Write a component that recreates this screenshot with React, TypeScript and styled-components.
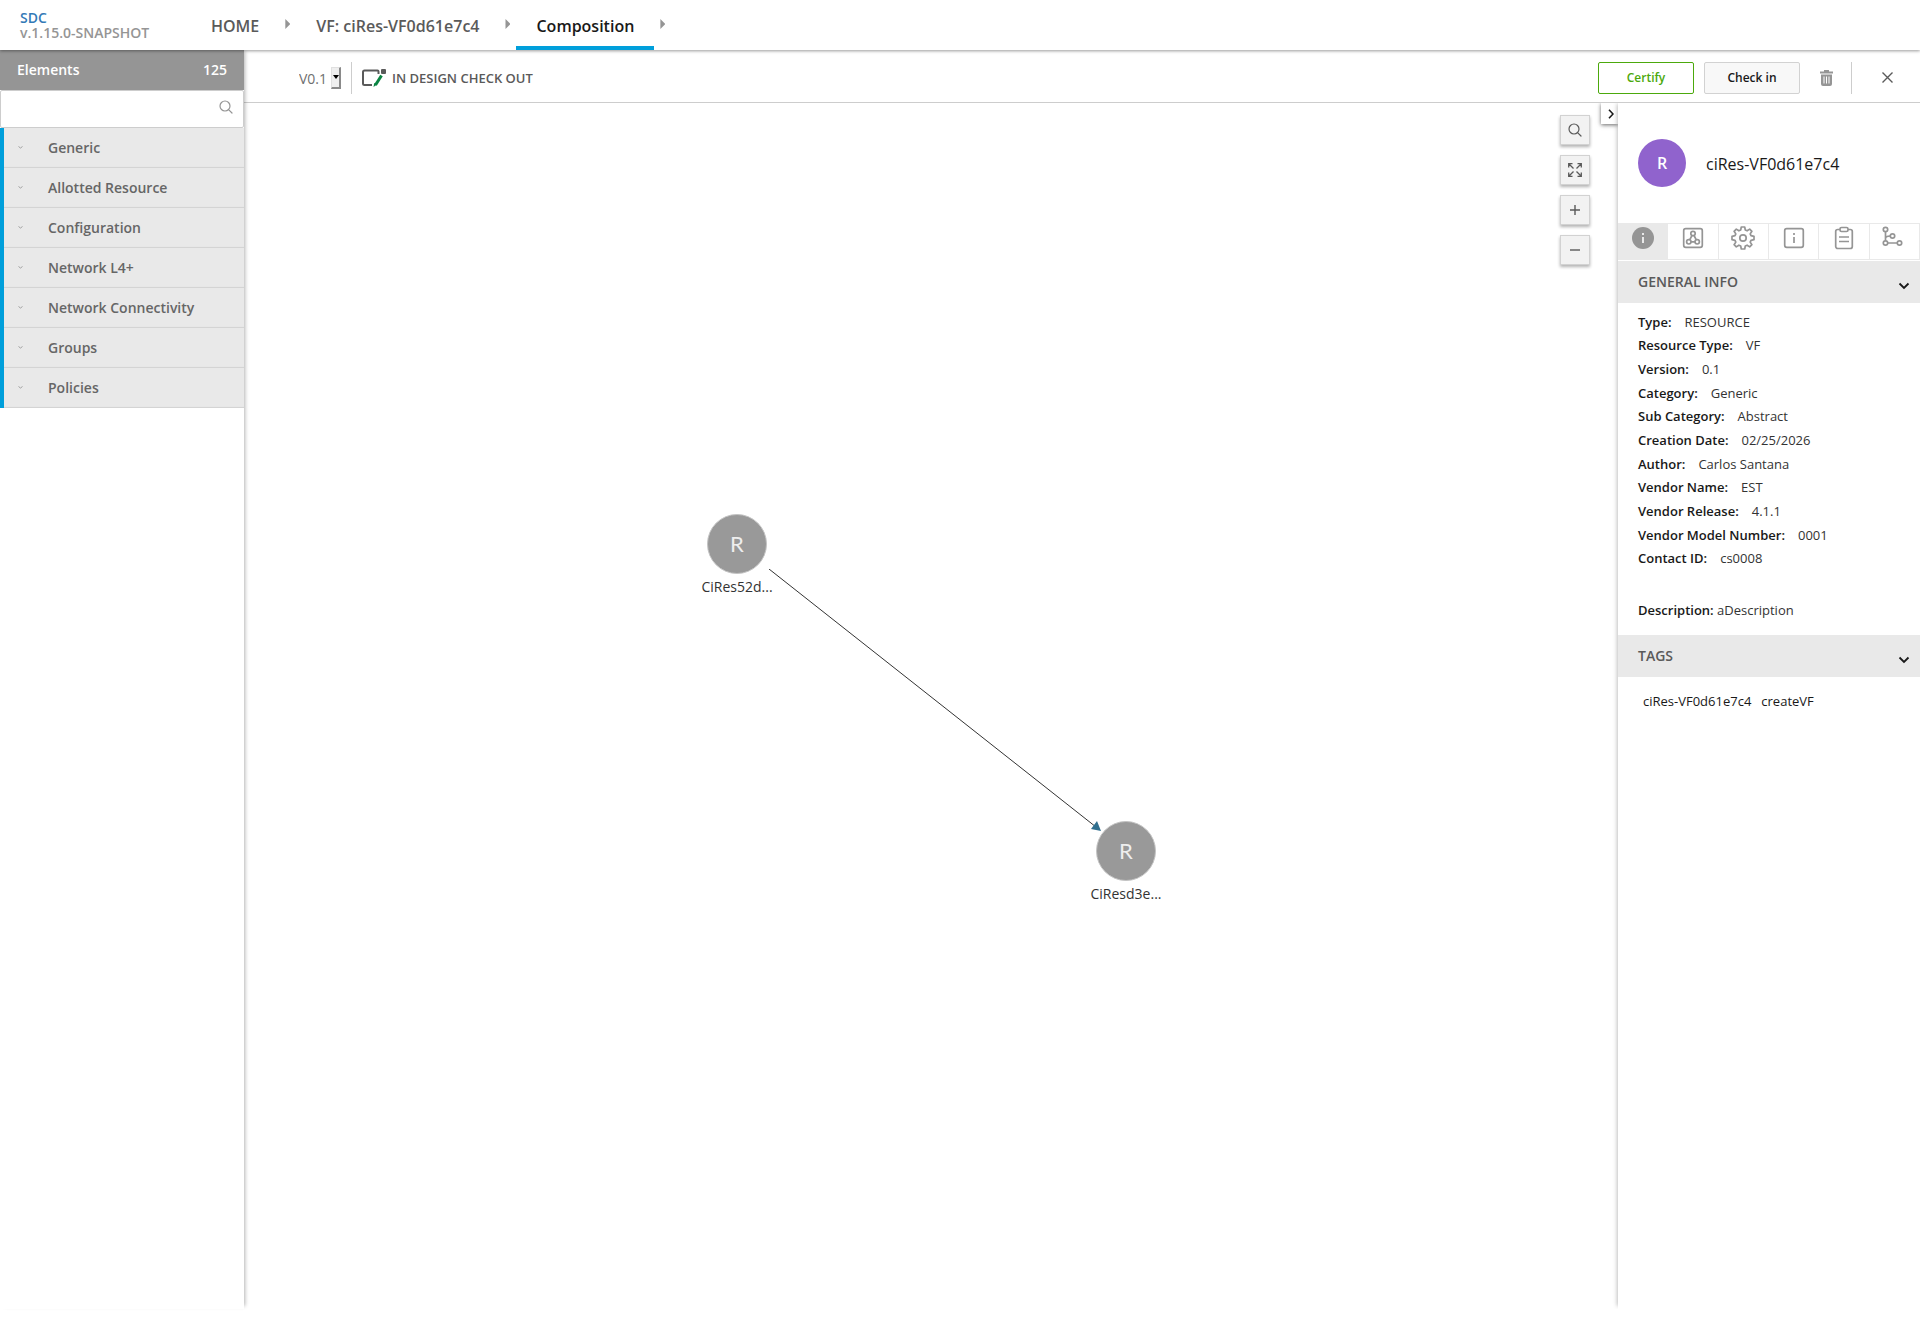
import React from 'react';
import styled, { createGlobalStyle } from 'styled-components';

const GlobalStyle = createGlobalStyle`
  *, *::before, *::after { box-sizing: border-box; }
  body {
    margin: 0;
    background: #fff;
    color: #191919;
    font-family: "Open Sans", "Noto Sans", sans-serif;
    font-size: 13px;
  }
  button, input, select { font: inherit; color: inherit; }
  button { cursor: pointer; }
  h1, h2, dl, dd, ul, p { margin: 0; padding: 0; }
`;

const Page = styled.div`
  display: flex;
  flex-direction: column;
  height: 100vh;
  overflow: hidden;
`;

const Header = styled.header`
  position: relative;
  z-index: 3;
  display: flex;
  flex: none;
  height: 50px;
  background: #fff;
  box-shadow: 0 1px 3px rgba(0, 0, 0, 0.4);
`;

const Brand = styled.div`
  display: flex;
  flex-direction: column;
  width: 191px;
  padding: 10px 0 0 20px;
  font-size: 14px;
  font-weight: 600;
  line-height: 15px;
  color: #959595;
`;

const BrandLink = styled.a`
  color: #337ab7;
  text-decoration: none;
`;

const Breadcrumbs = styled.nav`
  display: flex;
  align-items: stretch;
`;

const Crumb = styled.a<{ $active?: boolean }>`
  padding: 13px 20px 0;
  border-bottom: 4px solid ${(p) => (p.$active ? '#009fdb' : 'transparent')};
  color: ${(p) => (p.$active ? '#191919' : '#5a5a5a')};
  font-size: 16px;
  font-weight: 600;
  line-height: 26px;
  text-decoration: none;
`;

const CrumbArrow = styled.span`
  width: 5px;
  height: 10px;
  margin: 19px 6px 0;
  background: #959595;
  clip-path: polygon(0 0, 100% 50%, 0 100%);
`;

const Body = styled.div`
  display: flex;
  flex: 1;
  min-height: 0;
  padding-bottom: 10px;
`;

const Sidebar = styled.aside`
  position: relative;
  z-index: 2;
  flex: none;
  width: 244px;
  background: #fff;
  box-shadow: 3px -1px 4px -2px rgba(0, 0, 0, 0.3);
`;

const SidebarTitle = styled.h2`
  display: flex;
  justify-content: space-between;
  height: 40px;
  padding: 0 17px;
  background: #959595;
  color: #fff;
  font-size: 14px;
  font-weight: 600;
  line-height: 40px;
`;

const SearchBox = styled.label`
  display: flex;
  align-items: center;
  height: 38px;
  padding: 0 10px 4px 0;
  border: 1px solid #cdcdcd;
  border-radius: 2px;
  color: #959595;
`;

const SearchInput = styled.input`
  flex: 1;
  min-width: 0;
  height: 100%;
  padding: 0 10px;
  border: 0;
  outline: 0;
  background: transparent;
`;

const Category = styled.button`
  display: flex;
  align-items: center;
  gap: 25px;
  width: 100%;
  height: 40px;
  padding: 0 0 1px 14px;
  border: 0;
  border-left: 4px solid #009fdb;
  background: #e9e9e9;
  box-shadow: inset 0 -2px 1px -1px #d2d2d2;
  color: #666;
  font-size: 14px;
  font-weight: 600;
  text-align: left;
`;

const Main = styled.main`
  display: flex;
  flex-direction: column;
  flex: 1;
  min-width: 0;
`;

const Toolbar = styled.div`
  display: flex;
  align-items: center;
  justify-content: space-between;
  flex: none;
  height: 53px;
  padding: 3px 27px 0 55px;
  border-bottom: 1px solid #cdcdcd;
`;

const ToolbarGroup = styled.div`
  display: flex;
  align-items: center;
`;

const VersionPicker = styled.label`
  display: grid;
  grid-template-columns: 32px 10px;
  align-items: center;
  margin-right: 10px;
`;

const VersionSelect = styled.select`
  grid-area: 1 / 1 / 2 / 3;
  height: 24px;
  padding: 2px 0 0;
  border: 0;
  appearance: none;
  background: transparent;
  color: #6f6f6f;
  font-size: 14px;
`;

const VersionArrow = styled.span`
  display: grid;
  grid-area: 1 / 2;
  place-items: center;
  height: 22px;
  border: 1px solid #e0e0e0;
  border-right: 2px solid #8a8a8a;
  border-bottom: 2px solid #8a8a8a;
  background: #efefef;
  pointer-events: none;
`;

const Divider = styled.span<{ $gap: number }>`
  width: 1px;
  height: 32px;
  margin-right: ${(p) => p.$gap}px;
  background: #cdcdcd;
`;

const Status = styled.span`
  margin-left: 5px;
  color: #5a5a5a;
  font-size: 13px;
  font-weight: 600;
`;

const ActionButton = styled.button<{ $primary?: boolean }>`
  width: 96px;
  height: 32px;
  margin-right: ${(p) => (p.$primary ? 10 : 20)}px;
  padding: 0;
  border: 1px solid ${(p) => (p.$primary ? '#4ca90c' : '#d2d2d2')};
  border-radius: 2px;
  background: ${(p) => (p.$primary ? '#fff' : '#f8f8f8')};
  color: ${(p) => (p.$primary ? '#4ca90c' : '#191919')};
  font-size: 12px;
  font-weight: 600;
`;

const IconButton = styled.button<{ $gap?: number }>`
  display: flex;
  margin-right: ${(p) => p.$gap ?? 0}px;
  padding: 0;
  border: 0;
  background: none;
  color: #959595;
`;

const Workspace = styled.div`
  display: flex;
  flex: 1;
  min-height: 0;
`;

const Canvas = styled.section`
  position: relative;
  flex: 1;
  min-width: 0;
  overflow: hidden;
`;

const Edge = styled.svg`
  position: absolute;
  left: 525px;
  top: 466px;
`;

const Node = styled.div<{ $x: number; $y: number }>`
  position: absolute;
  left: ${(p) => p.$x}px;
  top: ${(p) => p.$y}px;
  display: flex;
  flex-direction: column;
  align-items: center;
  width: 80px;
  color: #333;
  font-size: 14px;
  line-height: 26px;
`;

const NodeCircle = styled.span`
  display: grid;
  place-items: center;
  width: 60px;
  height: 60px;
  border: 1px solid #c4c4c4;
  border-radius: 50%;
  background: #999;
  color: #eee;
  font-family: Lato, sans-serif;
  font-size: 22px;
`;

const CanvasTools = styled.div`
  position: absolute;
  top: 12px;
  right: 28px;
  display: flex;
  flex-direction: column;
  gap: 10px;
`;

const CanvasTool = styled.button`
  display: grid;
  place-items: center;
  width: 30px;
  height: 30px;
  padding: 0;
  border: 1px solid #d2d2d2;
  background: #f2f2f2;
  box-shadow: 0 2px 3px rgba(0, 0, 0, 0.3);
  color: #5a5a5a;
`;

const PanelToggle = styled.button`
  position: absolute;
  top: 0;
  right: 0;
  display: grid;
  place-items: center;
  width: 17px;
  height: 21px;
  padding: 0 0 0 2px;
  border: 0;
  background: #fff;
  box-shadow: 0 1px 4px rgba(0, 0, 0, 0.6);
  color: #191919;
`;

const Panel = styled.aside`
  position: relative;
  z-index: 1;
  flex: none;
  width: 302px;
  background: #fff;
  box-shadow: -3px -1px 4px -2px rgba(0, 0, 0, 0.25);
  clip-path: inset(0 0 0 -8px);
`;

const PanelHead = styled.div`
  display: flex;
  align-items: center;
  gap: 20px;
  height: 120px;
  padding-left: 20px;
`;

const Avatar = styled.span`
  display: grid;
  place-items: center;
  width: 48px;
  height: 48px;
  border-radius: 50%;
  background: #9063cd;
  color: #fff;
  font-size: 16px;
  font-weight: 600;
`;

const PanelName = styled.h1`
  padding-top: 2px;
  font-size: 16px;
  font-weight: 400;
  line-height: 24px;
`;

const Tabs = styled.div`
  display: grid;
  grid-template-columns: repeat(6, 1fr);
  height: 37px;
  margin-bottom: 1px;
  border-top: 1px solid #e9e9e9;
`;

const Tab = styled.button<{ $active?: boolean }>`
  display: flex;
  justify-content: center;
  padding: 2px 0 0;
  border: solid #e9e9e9;
  border-width: 0 1px 1px 0;
  background: ${(p) => (p.$active ? '#e9e9e9' : '#fff')};
  color: #959595;
`;

const SectionTitle = styled.button`
  display: flex;
  align-items: center;
  justify-content: space-between;
  width: 100%;
  height: 42px;
  padding: 0 10px 2px 20px;
  border: 0;
  background: #e9e9e9;
  color: #5a5a5a;
  font-size: 14px;
  font-weight: 600;

  svg {
    margin-top: 10px;
    color: #191919;
  }
`;

const Details = styled.dl`
  display: grid;
  grid-auto-rows: 1fr;
  height: 275px;
  padding: 7px 20px 8px;
`;

const Detail = styled.div`
  display: flex;
  align-items: center;
  gap: 13px;
`;

const Term = styled.dt`
  font-weight: 600;
`;

const Value = styled.dd`
  color: #333;
`;

const Description = styled.p`
  padding: 20px 20px 13px;
  line-height: 24px;
  color: #333;

  strong {
    color: #191919;
    font-weight: 600;
  }
`;

const Tags = styled.ul`
  display: flex;
  gap: 10px;
  padding: 12px 25px;
  line-height: 24px;
  list-style: none;
`;

const SearchIcon = ({ size }: { size: number }) => (
  <svg width={size} height={size} viewBox="0 0 14 14" fill="none" stroke="currentColor" strokeWidth="1.2" strokeLinecap="round">
    <circle cx="6" cy="6" r="5" />
    <path d="M9.8 9.8 13 13" />
  </svg>
);

const ChevronDown = () => (
  <svg width="12" height="8" viewBox="0 0 12 8" fill="none" stroke="currentColor" strokeWidth="1.8">
    <path d="M1.5 1.5 6 6l4.500-4.500" />
  </svg>
);

const CheckoutIcon = () => (
  <svg width="25" height="18" viewBox="0 0 25 18" fill="none">
    <path d="M10 16H2.500Q1 16 1 14.500V3Q1 1.500 2.500 1.500H15.500Q16.500 1.500 16.500 2.500V5" stroke="#5a5a5a" strokeWidth="2" />
    <rect x="19" y="0" width="5" height="5" rx="1" fill="#5a5a5a" />
    <path d="m19.500 6.500-6 9.500" stroke="#0a8442" strokeWidth="3" />
    <path d="m12.200 14-.7 4 3.300-2.300z" fill="#0a8442" />
  </svg>
);

const tabIcons: { label: string; icon: React.ReactNode }[] = [
  {
    label: 'Information',
    icon: (
      <>
        <circle cx="12" cy="12" r="11" fill="currentColor" stroke="none" />
        <path d="M12 7v2M12 11v6" stroke="#e9e9e9" strokeWidth="2" />
      </>
    ),
  },
  {
    label: 'Composition',
    icon: (
      <>
        <rect x="2.700" y="2.700" width="18.600" height="18.600" rx="2" />
        <circle cx="12" cy="7.500" r="2.200" />
        <circle cx="7.800" cy="15.800" r="2.200" />
        <circle cx="16.200" cy="15.800" r="2.200" />
        <path d="M11 9.500 8.800 13.700M13 9.500l2.200 4.200M10 15.800h4" />
      </>
    ),
  },
  {
    label: 'Properties',
    icon: (
      <>
        <circle cx="12" cy="12" r="3.200" />
        <path d="m10.300 1-.6 3-1.800.8L5.300 3.100 3.100 5.300l1.700 2.600L4 9.700l-3 .6v3.400l3 .6.8 1.800-1.700 2.600 2.200 2.200 2.600-1.700 1.800.8.600 3h3.400l.6-3 1.800-.8 2.600 1.700 2.200-2.200-1.700-2.600.8-1.800 3-.6v-3.400l-3-.6-.8-1.800 1.700-2.600-2.200-2.200-2.600 1.700-1.800-.8-.6-3z" strokeLinejoin="round" />
      </>
    ),
  },
  {
    label: 'Artifacts',
    icon: (
      <>
        <rect x="2.700" y="2.700" width="18.600" height="18.600" rx="2" />
        <path d="M12 7v2M12 11v6" />
      </>
    ),
  },
  {
    label: 'Requirements',
    icon: (
      <>
        <rect x="3.700" y="3.500" width="16.600" height="19" rx="2" />
        <rect x="8" y="1.500" width="8" height="4" rx="1.500" fill="#fff" />
        <path d="M7 11h10M7 15.500h10" />
      </>
    ),
  },
  {
    label: 'Relations',
    icon: (
      <>
        <circle cx="3.500" cy="3.500" r="2.200" />
        <circle cx="3.500" cy="17" r="2.200" />
        <circle cx="10.500" cy="10" r="2.200" />
        <circle cx="17.500" cy="17" r="2.200" />
        <path d="M3.500 5.700v9.100M5.700 17h9.600M3.500 12.500q0-2.500 4.800-2.500" />
      </>
    ),
  },
];

const crumbs = ['HOME', 'VF: ciRes-VF0d61e7c4', 'Composition'];

const categories = [
  'Generic',
  'Allotted Resource',
  'Configuration',
  'Network L4+',
  'Network Connectivity',
  'Groups',
  'Policies',
];

const details: [string, string][] = [
  ['Type', 'RESOURCE'],
  ['Resource Type', 'VF'],
  ['Version', '0.1'],
  ['Category', 'Generic'],
  ['Sub Category', 'Abstract'],
  ['Creation Date', '02/25/2026'],
  ['Author', 'Carlos Santana'],
  ['Vendor Name', 'EST'],
  ['Vendor Release', '4.1.1'],
  ['Vendor Model Number', '0001'],
  ['Contact ID', 'cs0008'],
];

const nodes = [
  { name: 'CiRes52d...', x: 453, y: 411 },
  { name: 'CiResd3e...', x: 842, y: 718 },
];

const canvasTools: { label: string; icon: React.ReactNode }[] = [
  { label: 'Search', icon: <SearchIcon size={14} /> },
  {
    label: 'Fit to screen',
    icon: (
      <svg width="14" height="14" viewBox="0 0 14 14" fill="none" stroke="currentColor" strokeWidth="1.3">
        <path d="M.7 4.500V.7h3.800M9.500.7h3.800v3.800M13.300 9.500v3.800H9.500M4.500 13.300H.7V9.500M1 1l4.500 4.500M13 1 8.500 5.500M13 13 8.500 8.500M1 13l4.500-4.500" />
      </svg>
    ),
  },
  {
    label: 'Zoom in',
    icon: (
      <svg width="10" height="10" viewBox="0 0 10 10" stroke="currentColor" strokeWidth="1.400">
        <path d="M5 0v10M0 5h10" />
      </svg>
    ),
  },
  {
    label: 'Zoom out',
    icon: (
      <svg width="10" height="10" viewBox="0 0 10 10" stroke="currentColor" strokeWidth="1.400">
        <path d="M0 5h10" />
      </svg>
    ),
  },
];

export default function App() {
  return (
    <Page>
      <GlobalStyle />
      <Header>
        <Brand>
          <BrandLink href="#home">SDC</BrandLink>
          <span>v.1.15.0-SNAPSHOT</span>
        </Brand>
        <Breadcrumbs aria-label="Breadcrumb">
          {crumbs.map((crumb) => (
            <React.Fragment key={crumb}>
              <Crumb href="#crumb" $active={crumb === 'Composition'}>
                {crumb}
              </Crumb>
              <CrumbArrow />
            </React.Fragment>
          ))}
        </Breadcrumbs>
      </Header>
      <Body>
        <Sidebar>
          <SidebarTitle>
            <span>Elements</span>
            <span>125</span>
          </SidebarTitle>
          <SearchBox>
            <SearchInput type="text" aria-label="Search elements" />
            <SearchIcon size={14} />
          </SearchBox>
          {categories.map((category) => (
            <Category key={category} type="button">
              <svg width="5" height="3" viewBox="0 0 5 3" fill="none" stroke="#a0a0a0">
                <path d="M.5.5 2.500 2l2-1.500" />
              </svg>
              {category}
            </Category>
          ))}
        </Sidebar>
        <Main>
          <Toolbar>
            <ToolbarGroup>
              <VersionPicker>
                <VersionSelect aria-label="Version" defaultValue="V0.1">
                  <option>V0.1</option>
                </VersionSelect>
                <VersionArrow>
                  <svg width="6" height="4" viewBox="0 0 6 4">
                    <path d="M0 0h6L3 4z" />
                  </svg>
                </VersionArrow>
              </VersionPicker>
              <Divider $gap={10} />
              <CheckoutIcon />
              <Status>IN DESIGN CHECK OUT</Status>
            </ToolbarGroup>
            <ToolbarGroup>
              <ActionButton type="button" $primary>
                Certify
              </ActionButton>
              <ActionButton type="button">Check in</ActionButton>
              <IconButton type="button" aria-label="Delete" $gap={18}>
                <svg width="13" height="16" viewBox="0 0 13 16" fill="currentColor">
                  <path d="M0 1.500h4V0h5v1.500h4v2H0zM1 4.500h11V14q0 2-2 2H3q-2 0-2-2z" />
                  <path d="M4 6.500v7M6.500 6.500v7M9 6.500v7" stroke="#fff" />
                </svg>
              </IconButton>
              <Divider $gap={30} />
              <IconButton type="button" aria-label="Close">
                <svg width="11" height="11" viewBox="0 0 11 11" stroke="#5a5a5a" strokeWidth="1.400">
                  <path d="m.5.5 10 10M10.500.5l-10 10" />
                </svg>
              </IconButton>
            </ToolbarGroup>
          </Toolbar>
          <Workspace>
            <Canvas aria-label="Composition canvas">
              <Edge width="336" height="268" viewBox="0 0 336 268">
                <path d="m0 0 327 258" stroke="#333" strokeWidth="1" />
                <path d="m332 262-10-2 6-8z" fill="#31708f" />
              </Edge>
              {nodes.map((node) => (
                <Node key={node.name} $x={node.x} $y={node.y}>
                  <NodeCircle>R</NodeCircle>
                  {node.name}
                </Node>
              ))}
              <CanvasTools>
                {canvasTools.map((tool) => (
                  <CanvasTool key={tool.label} type="button" aria-label={tool.label}>
                    {tool.icon}
                  </CanvasTool>
                ))}
              </CanvasTools>
              <PanelToggle type="button" aria-label="Collapse panel">
                <svg width="6" height="10" viewBox="0 0 6 10" fill="none" stroke="currentColor" strokeWidth="1.600">
                  <path d="m1 .8 4 4.200-4 4.200" />
                </svg>
              </PanelToggle>
            </Canvas>
            <Panel>
              <PanelHead>
                <Avatar>R</Avatar>
                <PanelName>ciRes-VF0d61e7c4</PanelName>
              </PanelHead>
              <Tabs>
                {tabIcons.map((tab, index) => (
                  <Tab key={tab.label} type="button" aria-label={tab.label} $active={index === 0}>
                    <svg width="24" height="24" viewBox="0 0 24 24" fill="none" stroke="currentColor" strokeWidth="1.700">
                      {tab.icon}
                    </svg>
                  </Tab>
                ))}
              </Tabs>
              <SectionTitle type="button">
                GENERAL INFO
                <ChevronDown />
              </SectionTitle>
              <Details>
                {details.map(([term, value]) => (
                  <Detail key={term}>
                    <Term>{term}:</Term>
                    <Value>{value}</Value>
                  </Detail>
                ))}
              </Details>
              <Description>
                <strong>Description:</strong> aDescription
              </Description>
              <SectionTitle type="button">
                TAGS
                <ChevronDown />
              </SectionTitle>
              <Tags>
                <li>ciRes-VF0d61e7c4</li>
                <li>createVF</li>
              </Tags>
            </Panel>
          </Workspace>
        </Main>
      </Body>
    </Page>
  );
}
